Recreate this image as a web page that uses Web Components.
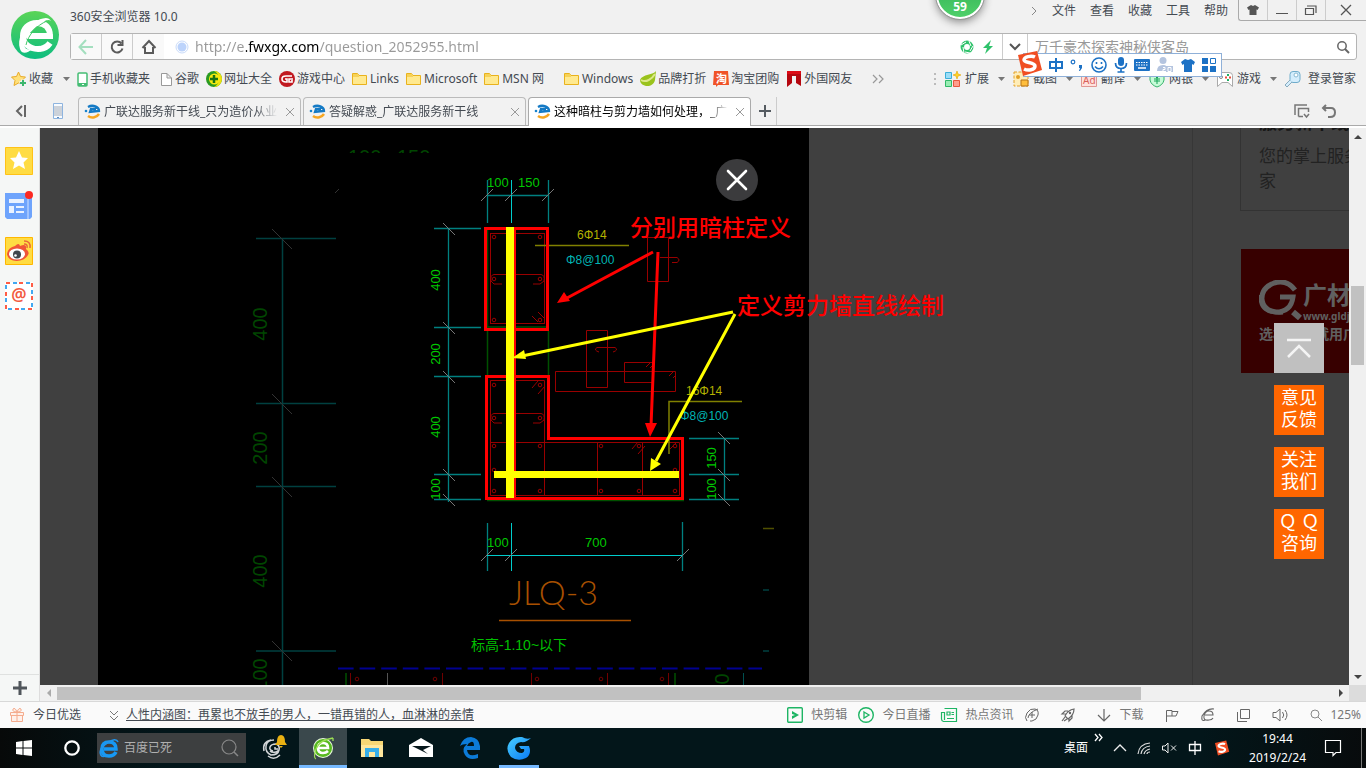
<!DOCTYPE html>
<html lang="zh-CN">
<head>
<meta charset="utf-8">
<title>这种暗柱与剪力墙如何处理</title>
<style>
html,body{height:100%;margin:0}
body{font:12px/16px "Noto Sans","Noto Sans CJK SC",sans-serif;color:#444a52;background:#f1f1f1;overflow:hidden}
</style>
</head>
<body>
<desktop-screen></desktop-screen>
<script>
const BASE='*{box-sizing:border-box}button{font:inherit;color:inherit;background:none;border:0;padding:0;margin:0;cursor:pointer;display:flex;align-items:center;justify-content:center}input{font:inherit;border:0;outline:0;background:none;padding:0;margin:0;min-width:0}a{color:inherit;text-decoration:none}';
function element(name,css,html,init){
  const t=document.createElement('template');
  t.innerHTML='<style>'+BASE+css+'</style>'+html;
  customElements.define(name,class extends HTMLElement{
    constructor(){super();this.attachShadow({mode:'open'}).append(t.content.cloneNode(true));}
    connectedCallback(){if(init)init(this,this.shadowRoot);}
  });
}

/* Icons: width, height, markup */
const folder='<path d="M.5 13.500V2.500H5.500L7 4.500H14.500V13.500Z" fill="#ffe98f" stroke="#e9b21d"/><path d="M1 3H5.500L7 5V6H1Z" fill="#f7d257"/>';
const sogou='<path d="M3 5 22 1 27 20 8 26Z" fill="#f04e23"/><path d="M20 7C16 5 9 7 9 10S20 12 20 16 13 21 9 19" fill="none" stroke="#fff" stroke-width="3.500"/>';
const ICONS={
 logo:[48,48,'<defs><linearGradient id="a" x2="0" y2="1"><stop stop-color="#5ad457"/><stop offset="1" stop-color="#0dbd80"/></linearGradient></defs><circle cx="24" cy="24" r="24" fill="url(#a)"/><path d="M16 25H39C39 16 34 12 26 12 17 12 12 18 12 25S18 38 27 38C33 38 37 35 39 32" fill="none" stroke="#fff" stroke-width="6"/><path d="M40 10C37 4 29 8 23 11 11 17 6 28 9 38 11 44 17 42 21 38 15 40 12 36 14 31 17 22 25 15 32 11 35 9 38 8 40 10Z" fill="#fff"/><path d="M15 34C17 24 26 14 36 10" fill="none" stroke="#41ca68"/>'],
 back:[16,16,'<path d="M15 8H2M8 1 1.500 8 8 15" fill="none" stroke="#a4dfbf" stroke-width="2"/>'],
 reload:[16,16,'<path d="M12.500 4.500A5.500 5.500 0 1 0 13.500 9.500" fill="none" stroke="#5b5b5b" stroke-width="2"/><path d="M13.500 1V6H8.500" fill="none" stroke="#5b5b5b" stroke-width="2"/>'],
 home:[16,16,'<path d="M1.500 9 8 2 14.500 9M4 8V14H12V8" fill="none" stroke="#5b5b5b" stroke-width="2"/>'],
 dot:[14,14,'<circle cx="7" cy="7" r="6" fill="#fff" stroke="#c9dbfa" /><circle cx="7" cy="7" r="4.500" fill="#bcd3fb"/>'],
 shutter:[14,14,'<circle cx="7" cy="7" r="4.700" fill="none" stroke="#2fc26b" stroke-width="3.500"/><path d="M1 5 6 2M9 1 11 6M13 6 10 11M10 13 5 12M4 13 3 7" stroke="#fff"/>'],
 bolt:[12,14,'<path d="M9 0 1 8H5L3 14 11 6H7Z" fill="#2fc26b"/>'],
 down:[12,8,'<path d="M1 1 6 6 11 1" fill="none" stroke="#555" stroke-width="2"/>'],
 search:[14,14,'<circle cx="6" cy="6" r="4.200" fill="none" stroke="#666" stroke-width="1.500"/><path d="M9 9 13 13" stroke="#666" stroke-width="2"/>'],
 more:[7,10,'<path d="M1 1 5 5 1 9" fill="none" stroke="#888"/>'],
 shirt:[12,10,'<path d="M4 0 6 1 8 0 12 2.500 10.500 5 9.500 4.500V10H2.500V4.500L1.500 5 0 2.500Z" fill="#555"/>'],
 min:[12,10,'<path d="M0 8.500H12" stroke="#555"/>'],
 max:[12,10,'<path d="M.5 3.500H8.500V9.500H.5ZM2 1H11V8" fill="none" stroke="#555" stroke-width="1.200"/>'],
 close:[10,10,'<path d="M0 0 10 10M10 0 0 10" stroke="#555" stroke-width="1.300"/>'],
 tabclose:[8,8,'<path d="M0 0 8 8M8 0 0 8" stroke="#999"/>'],
 caret:[7,4,'<path d="M0 0H7L3.500 4Z" fill="#777"/>'],
 star:[16,16,'<path d="M7.500 1 9.500 5.500 14.500 6 11 9.500 12 14.500 7.500 12 3 14.500 4 9.500 .5 6 5.500 5.500Z" fill="#ffe07a" stroke="#e9ab28"/><path d="M12 8.500V15.500M8.500 12H15.500" stroke="#f1f1f1" stroke-width="4"/><path d="M12 9V15M9 12H15" stroke="#3cb66d" stroke-width="2"/>'],
 phone:[11,16,'<rect x="1" y="2" width="9" height="13" rx="1" fill="#fff" stroke="#45bd74" stroke-width="1.500"/><path d="M1 12H10V15H1Z" fill="#45bd74"/><path d="M5 13.500H7" stroke="#fff"/>'],
 page:[16,16,'<path d="M4.500 2.500H10L14.500 7V14.500H4.500ZM10 2.500V7H14.500" fill="#fff" stroke="#999"/>'],
 plusball:[16,16,'<circle cx="8" cy="8" r="8" fill="#2a9a21"/><path d="M8 0A8 8 0 0 1 8 16 9 9 0 0 0 8 0Z" fill="#f0e20b"/><circle cx="8.500" cy="8" r="5.500" fill="#f6ea10"/><path d="M8 4V12M4 8H12" stroke="#187313" stroke-width="2.500"/>'],
 game:[16,16,'<circle cx="8" cy="8" r="8" fill="#c11920"/><path d="M13 5H7Q3 5 3 8T7 11H8V8H6M14 8H10V11H13V9" fill="none" stroke="#fff" stroke-width="1.600"/>'],
 folder:[16,16,folder],
 leaf:[16,16,'<path d="M16 0C14 4 2 3 0 9C0 16 13 18 15 9Z" fill="#9ac31c"/><path d="M1 9C6 12 12 8 15 3" fill="none" stroke="#dce88a" stroke-width="2"/>'],
 tao:[16,16,'<path d="M1 0H15L16 14H5L3 16V14H0Z" fill="#f05328"/><text x="3" y="12" font-size="11" font-weight="bold" fill="#fff">淘</text>'],
 gate:[16,16,'<path d="M1 0H15V15L10 12V5H6V12L1 16Z" fill="#b5070f"/><path d="M1 0H15V3H1Z" fill="#dd0a14"/>'],
 dbl:[12,10,'<path d="M1 1 5 5 1 9M7 1 11 5 7 9" fill="none" stroke="#999" stroke-width="1.200"/>'],
 grip:[4,14,'<path d="M2 1V14" stroke="#bbb" stroke-width="2" stroke-dasharray="2 3"/>'],
 ext:[16,16,'<path d="M.5 1.500H6.500V7.500H.5Z" fill="#9bddf7" stroke="#3bafd9"/><path d="M.5 9.500H6.500V15.500H.5Z" fill="#99edb4" stroke="#31b968"/><path d="M8.500 9.500H14.500V15.500H8.500Z" fill="#ff9e8d" stroke="#e65840"/><path d="M12 0 13 3 16 4 13 5 12 8 11 5 8 4 11 3Z" fill="#ffd426" stroke="#e6a400" stroke-width=".6"/>'],
 shot:[16,16,'<path d="M1 1H15V15H1Z" fill="#ffedb7" stroke="#e3a128" stroke-dasharray="3 1.500"/><path d="M8 9H15V15H8Z" fill="#ffbe3c" stroke="#b57318"/><circle cx="5" cy="6" r="2" fill="#e3a128"/>'],
 ad:[16,16,'<path d="M.5 1.500H15.500V15.500H.5Z" fill="#ffe1dd" stroke="#e09793"/><text x="2" y="13" font-size="10" fill="#d9605a">Ad</text>'],
 bank:[16,16,'<path d="M1 3Q5 3 8 0 11 3 15 3V9Q14 14 8 16 2 14 1 9Z" fill="#c7fbd8" stroke="#35b46b"/><path d="M5 4 8 7 11 4M8 7V13M5 8H11M5 10H11" fill="none" stroke="#16a456"/>'],
 pad:[16,16,'<path d="M.5 15.500V4.500Q.5 1.500 4 1.500H12Q15.500 1.500 15.500 4.500V15.500L11 11.500H5Z" fill="#fff" stroke="#aaa"/><circle cx="4" cy="6" r="1.500" fill="none" stroke="#888"/><path d="M11 3V5M11 8V10" stroke="#1fae62" stroke-width="2"/><path d="M8 6.500H10M12 6.500H14" stroke="#e8503d" stroke-width="2"/>'],
 key:[16,16,'<rect x="5" y=".5" width="10" height="11" rx="3" fill="#d4edfc" stroke="#6faccb"/><circle cx="11" cy="4" r="2" fill="#fff" stroke="#88b9d1"/><path d="M5 9 0 14 2 16 7 11" fill="#d4edfc" stroke="#88aabd"/>'],
 collapse:[12,12,'<path d="M7 1 2 6 7 11M10 0V12" fill="none" stroke="#666" stroke-width="2"/>'],
 mobile:[10,16,'<path d="M.5.5H9.500V15.500H.5Z" fill="#f7fbff" stroke="#8eb4df"/><path d="M1 3H9V13H1Z" fill="#ccd2da"/><path d="M4 14.500H6" stroke="#608cc1"/>'],
 fav:[16,14,'<path d="M4 2C9-1 15 2 15 6L6 7 7 4 12 4" fill="none" stroke="#147ac5" stroke-width="2.300"/><path d="M4 11C8 14 13 12 15 9" fill="none" stroke="#f5a623" stroke-width="2.500"/><circle cx="2" cy="6" r="1.300" fill="#1683ce"/>'],
 plus:[12,12,'<path d="M6 0V12M0 6H12" stroke="#555b61" stroke-width="2"/>'],
 bigplus:[14,14,'<path d="M7 0V14M0 7H14" stroke="#50565b" stroke-width="3"/>'],
 tabs:[16,14,'<path d="M1 11V1H13M4.500 12.500V4.500H14.500V8M4.500 12.500H9" fill="none" stroke="#777" stroke-width="1.500"/><path d="M10 10 12.500 13 15 10" fill="none" stroke="#777" stroke-width="1.500"/>'],
 undo:[14,14,'<path d="M1 4H9Q13 4 13 8.500T8 13H6M4 1 1 4 4 7" fill="none" stroke="#777" stroke-width="2"/>'],
 sideStar:[28,28,'<path d="M.5.5H27.500V27.500H.5Z" fill="#ffdc43" stroke="#ffc217"/><path d="M14 4 17 10.500 23 11 18.500 15.500 20 22 14 18.500 8 22 9.500 15.500 5 11 11 10.500Z" fill="#fff"/>'],
 sideNews:[28,28,'<path d="M0 1H27V25L25 27H2L0 25Z" fill="#6ea4fc"/><path d="M23 1V27" stroke="#9fc3ff" stroke-width="2"/><path d="M4 7H19V11H4ZM4 14H9V21H4ZM11 14H19V16H11ZM11 19H19V21H11Z" fill="#eaf2ff"/><circle cx="24" cy="3" r="4" fill="#fb2922"/>'],
 weibo:[28,28,'<path d="M.5.5H27.500V27.500H.5Z" fill="#ffdc43" stroke="#ffb700"/><path d="M10 9Q14 5 15 9 22 6 21 12 25 15 23 18C19 26 3 26 2 17 3 12 6 10 10 9Z" fill="#f05437"/><ellipse cx="12" cy="17" rx="8" ry="5.500" fill="#fff"/><circle cx="12" cy="17.500" r="4" fill="#40464c"/><circle cx="10.500" cy="18.500" r="1.300" fill="#fff"/><path d="M19 4Q26 4 25 11M19 7Q23 7 22 11" fill="none" stroke="#e9663a" stroke-width="1.500"/>'],
 mailAt:[28,28,'<path d="M0 0H28V28H0Z" fill="#fff"/><path d="M1 1H27V27H1Z" fill="none" stroke="#ff5c45" stroke-width="2" stroke-dasharray="4 9"/><path d="M1 1H27V27H1Z" fill="none" stroke="#42a8f1" stroke-width="2" stroke-dasharray="4 9" stroke-dashoffset="6"/><text x="14" y="19" text-anchor="middle" font-size="17" font-weight="600" fill="#f25a41">@</text>'],
 gift:[16,16,'<path d="M1.500 5.500H14.500V8.500H1.500ZM2.500 8.500H13.500V14.500H2.500ZM8 5V14M8 5Q3 5 4 2 6 0 8 5 10 0 12 2 13 5 8 5" fill="#fff1eb" stroke="#f5ac8e"/>'],
 dd:[8,9,'<path d="M0 0 4 4 8 0M0 5 4 9 8 5" fill="none" stroke="#777"/>'],
 edit:[16,16,'<rect x=".7" y=".7" width="14.600" height="14.600" rx="1" fill="none" stroke="#1eb564" stroke-width="1.400"/><path d="M5 4 12 8 5 12V9L8 8 5 7Z" fill="#1eb564"/>'],
 live:[16,16,'<circle cx="8" cy="8" r="7.300" fill="none" stroke="#1eb564" stroke-width="1.400"/><path d="M6 5 11 8 6 11Z" fill="none" stroke="#1eb564" stroke-width="1.300"/>'],
 news:[16,16,'<path d="M3.500 1.500H15.500V14.500H2.500Q.5 14 .5 12V5.500H3.500V13M6 5H9V8H6ZM10.500 5.500H13M10.500 7.500H13M6 11.500H13" fill="none" stroke="#1eb564" stroke-width="1.200"/>'],
 speed:[14,14,'<path d="M2 13Q-1 10 2 5T10 1Q14 2 13 7T7 13H5M3 10Q3 5 13 1M4 7H10M7 4V10" fill="none" stroke="#666"/>'],
 rocket:[14,14,'<path d="M4 8Q7 2 13 1 13 7 7 11ZM5 6 1 6 4 3H7M8 10V13L11 10V7M4 9 1 13M6 11 3 13" fill="none" stroke="#666" stroke-width="1.200"/><circle cx="9" cy="5" r="1.200" fill="#666"/>'],
 dl:[14,14,'<path d="M7 1V13M1 7 7 13 13 7" fill="none" stroke="#666" stroke-width="1.200"/>'],
 flag:[14,14,'<path d="M1.500 14V2.500H7V8H1.500M7 3.500H13L11 8H7" fill="none" stroke="#666"/>'],
 ebr:[14,14,'<path d="M4 7H12Q12 3 8 3T3 8 8 12Q11 12 12 10M13 1Q6 0 1 8 0 14 4 12" fill="none" stroke="#666" stroke-width="1.100"/>'],
 win:[13,13,'<path d="M3.500.5H12.500V9.500H3.500ZM.5 3V12.500H10" fill="none" stroke="#666"/>'],
 sound:[16,14,'<path d="M1 4.500H4L8 1V13L4 9.500H1ZM10.500 4Q13 7 10.500 10M13 2Q17 7 13 12" fill="none" stroke="#666"/>'],
 zoom:[12,12,'<circle cx="5" cy="5" r="4" fill="none" stroke="#888"/><path d="M8 8 12 12" stroke="#888"/>'],
 windows:[16,16,'<path d="M0 2 6.500 1V7.500H0ZM7.500 1 16 0V7.500H7.500ZM0 8.500H6.500V15L0 14ZM7.500 8.500H16V16L7.500 15Z" fill="#fff"/>'],
 ring:[16,16,'<circle cx="8" cy="8" r="6.700" fill="none" stroke="#fff" stroke-width="2.300"/>'],
 ie:[20,20,'<path d="M5 11H17Q17 4 10 4T3 11 10 18Q15 18 17 14" fill="none" stroke="#1699f5" stroke-width="3.500"/><path d="M19 4Q17-1 8 5T2 17Q3 20 8 17" fill="none" stroke="#2095ec" stroke-width="1.700"/>'],
 find:[18,18,'<circle cx="8" cy="8" r="7" fill="none" stroke="#888" stroke-width="1.200"/><path d="M13 13 17 17" stroke="#888" stroke-width="1.500"/>'],
 swirl:[28,28,'<path d="M13 17Q9 16 10 13T16 10Q20 11 19 16T11 21Q5 18 6 12T14 6M19 16 16 18Q12 19 10 17M15 13V15H18M4 17Q2 8 11 6M8 22Q14 27 20 21" fill="none" stroke="#d3d6d8" stroke-width="1.500"/><path d="M15 11 17 8Q17 1 21 1T25 8L27 11ZM19 12H23L21 14Z" fill="#eab112"/>'],
 browser:[24,24,'<circle cx="12" cy="12" r="10" fill="#eaf8de"/><circle cx="12" cy="12" r="9" fill="#58b920"/><path d="M8 12H17Q17 7 12 7T7 12 12 17Q15 17 17 15" fill="none" stroke="#fff" stroke-width="2.600"/><path d="M22 2Q8 4 5 13T5 23M22 2V5" fill="none" stroke="#9bdf54" stroke-width="1.300"/>'],
 explorer:[22,20,'<path d="M0 1H8L10 3H22V19H0Z" fill="#f8d775"/><path d="M0 7H22V19H0Z" fill="#ffe69c"/><path d="M4 19V10H18V19H14V14H8V19Z" fill="#38aee8"/>'],
 mail:[24,20,'<path d="M0 7 12 0 24 7V19H0Z" fill="#fff"/><path d="M3 8H22L14 12 19 16 11 12Z" fill="#06171b"/>'],
 edge:[22,22,'<path d="M1 9Q4 0 12 0 20 1 21 9V13H8Q9 21 19 17V21Q10 24 6 18 2 12 8 7 3 7 1 9ZM8 9H15Q15 4 12 5T8 9Z" fill="#0c7bd8"/>'],
 gblue:[24,24,'<defs><linearGradient id="a" x2="1" y2="1"><stop stop-color="#49cfff"/><stop offset="1" stop-color="#0878f5"/></linearGradient></defs><path d="M24 2Q19 7 14 6 8 7 8 12 9 17 15 17 18 16 17 13H14L12 10H22Q25 18 19 22 11 26 4 21-2 14 2 7 6 0 15 1 20 4 24 2Z" fill="url(#a)"/>'],
 up:[12,8,'<path d="M0 7 6 1 12 7" fill="none" stroke="#eee" stroke-width="1.300"/>'],
 wifi:[14,14,'<path d="M1 13Q2 3 13 2M4 13Q5 6 13 5M7 13Q8 9 13 8M10 13Q10 11 13 11" fill="none" stroke="#ddd" stroke-width="1.200"/>'],
 mute:[15,12,'<path d="M.5 4H3L6 1V11L3 8H.5ZM9 3.500 14 8.500M14 3.500 9 8.500" fill="none" stroke="#eee"/>'],
 dblw:[8,7,'<path d="M0 0 3 3.500 0 7M4 0 7 3.500 4 7" fill="none" stroke="#fff" stroke-width="1.300"/>'],
 sogou:[28,27,sogou],
 note:[16,16,'<path d="M.5.5H15.500V12.500H11L8 15.500V12.500H.5Z" fill="none" stroke="#fff" stroke-width="1.200"/>'],
 smile:[16,16,'<circle cx="8" cy="8" r="7" fill="none" stroke="#1d72c5" stroke-width="1.600"/><path d="M5.500 5V7M10.500 5V7M4 9.500Q8 14 12 9.500" fill="none" stroke="#1d72c5" stroke-width="1.600"/>'],
 mic:[14,16,'<rect x="4" y="0" width="6" height="9" rx="3" fill="#1d72c5"/><path d="M1.500 6Q1.500 11.500 7 11.500T12.500 6M7 11V15M3.500 15H10.500" fill="none" stroke="#1d72c5" stroke-width="1.700"/>'],
 keyb:[16,12,'<rect width="16" height="12" rx="1" fill="#1d72c5"/><path d="M2 3.500H14M2 6H14" stroke="#fff" stroke-dasharray="1.500 1"/><path d="M4 9H12" stroke="#fff" stroke-width="1.500"/>'],
 user:[17,16,'<circle cx="6" cy="3.500" r="3.500" fill="#b4c4df"/><path d="M0 14Q0 8 6 8 9 8 9 9V14ZM9 9H16V15H9Z" fill="#b4c4df"/><path d="M6 10.500H8V12.500H6V14.500H8.500M11 10.500H14V14.500H11Z" fill="none" stroke="#fff"/>'],
 tee:[14,14,'<path d="M4 1 7 2 10 1 14 4 12.500 7 11 6V14H3V6L1.500 7 0 4Z" fill="#1d72c5"/>'],
 apps:[14,14,'<path d="M0 0H6V6H0ZM0 8H6V14H0ZM8 8H14V14H8Z" fill="#1d72c5"/><path d="M8.500.5H13.500V5.500H8.500Z" fill="none" stroke="#1d72c5"/>'],
 zhong:[14,14,'<path d="M1 4H13V10H1ZM7 0V14" fill="none" stroke="#1d72c5" stroke-width="2"/>'],
 zhongw:[14,14,'<path d="M1.500 3.500H12.500V9.500H1.500ZM7 0V14" fill="none" stroke="#fff" stroke-width="1.300"/>'],
 punct:[14,14,'<circle cx="3" cy="4" r="1.800" fill="none" stroke="#1d72c5" stroke-width="1.200"/><path d="M9 7H12V10L10 13H9L10 10H9Z" fill="#1d72c5"/>'],
 top:[26,22,'<path d="M1 3H25M2 20 13 9 24 20" fill="none" stroke="#f4f4f4" stroke-width="2.500"/>'],
 shut:[20,20,'<path d="M1 1 19 19M19 1 1 19" stroke="#fff" stroke-width="2.600" stroke-linecap="round"/>']
};
element('ui-icon',':host{display:inline-flex;flex:none}svg{display:block;overflow:visible}','',(h,r)=>{
  const icon=ICONS[h.getAttribute('name')];
  if(!icon||r.querySelector('svg'))return;
  const [w,hh,m]=icon,s=+h.getAttribute('size')||w;
  r.innerHTML+=`<svg width="${s}" height="${Math.round(hh*s/w)}" viewBox="0 0 ${w} ${hh}" aria-hidden="true">${m}</svg>`;
});

element('title-bar',`
:host{display:flex;height:33px;align-items:flex-start}
.t{flex:1;padding-top:9px}
nav{display:flex;gap:14px;padding-top:3px;margin-right:10px;align-items:center}
.w{display:flex;height:21px;border:1px solid #aaa;border-top:0;border-right:0;border-radius:0 0 0 3px}
.w button{width:28px;height:20px;border-left:1px solid #ccc;box-sizing:content-box}
.w button:first-child{border:0}.w button:last-child{width:40px}
`,`<div class="t">360安全浏览器 10.0</div>
<nav><ui-icon name="more"></ui-icon><a href="#">文件</a><a href="#">查看</a><a href="#">收藏</a><a href="#">工具</a><a href="#">帮助</a></nav>
<div class="w"><button aria-label="皮肤"><ui-icon name="shirt"></ui-icon></button><button aria-label="最小化"><ui-icon name="min"></ui-icon></button><button aria-label="还原"><ui-icon name="max"></ui-icon></button><button aria-label="关闭"><ui-icon name="close"></ui-icon></button></div>`);

element('address-bar',`
:host{display:flex;height:27px;margin-right:9px;border:1px solid #b4b4b4;border-radius:3px;background:#fff;align-items:stretch}
.n{width:31px;background:#f9f9f9;border-right:1px solid #ccc}
.n:nth-of-type(3){border:0}
.u{flex:1;display:flex;align-items:center;gap:6px;padding-left:11px}
.u input{flex:1;height:25px;font-size:14px;color:transparent;background:linear-gradient(90deg,#999 51px,#000 51px 124px,#999 124px);-webkit-background-clip:text;background-clip:text}
.act{display:flex;gap:8px;align-items:center;margin-right:8px}
.d{width:26px;border:solid #ccc;border-width:0 1px}
.s{width:328px;display:flex;align-items:center;padding:0 6px 0 7px}
.s input{flex:1;font-size:14px;color:#777}.s input::placeholder{color:#999}
`,`<button class="n" aria-label="后退"><ui-icon name="back"></ui-icon></button><button class="n" aria-label="刷新"><ui-icon name="reload"></ui-icon></button><button class="n" aria-label="主页"><ui-icon name="home"></ui-icon></button>
<div class="u"><ui-icon name="dot"></ui-icon><input aria-label="地址" value="http://e.fwxgx.com/question_2052955.html"></div>
<div class="act"><ui-icon name="shutter"></ui-icon><ui-icon name="bolt"></ui-icon></div>
<button class="d" aria-label="展开"><ui-icon name="down"></ui-icon></button>
<div class="s"><input aria-label="搜索" placeholder="万千豪杰探索神秘侠客岛"><button aria-label="搜索"><ui-icon name="search"></ui-icon></button></div>`);

element('browser-header',`
:host{display:grid;grid-template-columns:70px 1fr;height:60px}
.l{padding:11px}`,`<div class="l"><ui-icon name="logo"></ui-icon></div><div><title-bar></title-bar><address-bar></address-bar></div>`);

element('book-mark',`:host{display:flex;flex:none}a{display:flex;align-items:center;gap:2px;white-space:nowrap}.i{display:flex}`,
`<a href="#"><span class="i"></span><slot></slot></a>`,(h,r)=>r.querySelector('.i').innerHTML=`<ui-icon name="${h.getAttribute('icon')}"></ui-icon>`);
element('tool-item',`:host{display:flex;flex:none}button{gap:4px;white-space:nowrap}.i{display:flex}.c{margin-left:5px;display:flex}:host([plain]) .c{display:none}:host([plain]) button{gap:7px}`,
`<button><span class="i"></span><slot></slot><span class="c"><ui-icon name="caret"></ui-icon></span></button>`,(h,r)=>r.querySelector('.i').innerHTML=`<ui-icon name="${h.getAttribute('icon')}"></ui-icon>`);

element('bookmark-bar',`
:host{display:flex;height:36px;align-items:center;justify-content:space-between;padding:1px 10px 0 11px}
.g,.f,.r{display:flex;align-items:center}
.g{gap:7px}.f{gap:20px}.r{gap:8px}
.first{display:flex;align-items:center;gap:10px}
`,`<div class="f"><div class="g"><div class="first"><book-mark icon="star">收藏</book-mark><ui-icon name="caret"></ui-icon></div>
<book-mark icon="phone">手机收藏夹</book-mark><book-mark icon="page">谷歌</book-mark><book-mark icon="plusball">网址大全</book-mark><book-mark icon="game">游戏中心</book-mark><book-mark icon="folder">Links</book-mark><book-mark icon="folder">Microsoft</book-mark><book-mark icon="folder">MSN 网</book-mark></div>
<div class="g"><book-mark icon="folder">Windows</book-mark><book-mark icon="leaf">品牌打折</book-mark><book-mark icon="tao">淘宝团购</book-mark><book-mark icon="gate">外国网友</book-mark></div><ui-icon name="dbl"></ui-icon></div>
<div class="r"><ui-icon name="grip"></ui-icon><tool-item icon="ext">扩展</tool-item><tool-item icon="shot">截图</tool-item><tool-item icon="ad">翻译</tool-item><tool-item icon="bank">网银</tool-item><tool-item icon="pad">游戏</tool-item><tool-item icon="key" plain>登录管家</tool-item></div>`);

element('page-tab',`
:host{display:flex;width:223px;height:28px;align-items:center;gap:4px;padding:0 6px 0 5px;border:1px solid #bbb;border-bottom:0;border-radius:4px 4px 0 0;background:#f2f2f2}
:host([active]){background:#fff;color:#000;border-color:#aaa;margin-bottom:-1px;height:29px}
span{flex:1;min-width:0;overflow:hidden;white-space:nowrap;margin-right:4px;-webkit-mask:linear-gradient(90deg,#000 150px,transparent 174px)}
`,`<ui-icon name="fav"></ui-icon><span><slot></slot></span><button aria-label="关闭标签"><ui-icon name="tabclose"></ui-icon></button>`);
element('tab-strip',`
:host{display:flex;height:30px;align-items:flex-end;border-bottom:1px solid #aaa;padding-right:30px}
.l{width:78px;display:flex;align-items:center;gap:26px;padding-left:15px;height:29px}
.tabs{display:flex;gap:2px;flex:1;align-items:flex-end}
.plus{width:24px;height:28px;border-right:1px solid #ccc}
.r{display:flex;gap:12px;height:29px;align-items:center}
`,`<div class="l"><button aria-label="收起"><ui-icon name="collapse"></ui-icon></button><ui-icon name="mobile"></ui-icon></div>
<div class="tabs"><page-tab>广联达服务新干线_只为造价从业者</page-tab><page-tab>答疑解惑_广联达服务新干线</page-tab><page-tab active>这种暗柱与剪力墙如何处理，_广联达</page-tab><button class="plus" aria-label="新标签"><ui-icon name="plus"></ui-icon></button></div>
<div class="r"><button aria-label="标签列表"><ui-icon name="tabs"></ui-icon></button><button aria-label="撤销关闭"><ui-icon name="undo"></ui-icon></button></div>`);

element('side-bar',`
:host{display:flex;flex-direction:column;width:40px;background:#f5f7f6;border-right:1px solid #ddd}
.i{flex:1;display:flex;flex-direction:column;gap:17px;padding:19px 0 0 5px;align-items:flex-start}
.p{height:27px;border-top:1px solid #dfe1e0}
`,`<div class="i"><button aria-label="收藏"><ui-icon name="sideStar"></ui-icon></button><button aria-label="新闻"><ui-icon name="sideNews"></ui-icon></button><button aria-label="微博"><ui-icon name="weibo"></ui-icon></button><button aria-label="邮箱"><ui-icon name="mailAt"></ui-icon></button></div><button class="p" aria-label="添加"><ui-icon name="bigplus"></ui-icon></button>`);

/* CAD picture */
const dots=a=>a.map(([x,y])=>`<circle cx="${x}" cy="${y}" r="1.800"/>`).join('');
const slash=a=>a.map(([x,y])=>`M${x-6} ${y+6}L${x+6} ${y-6}`).join('');
const back=(a,n=6)=>a.map(([x,y])=>`M${x-n} ${y-n}L${x+n} ${y+n}`).join('');
const turned=(x,y,t)=>`<text transform="translate(${x} ${y}) rotate(-90)" text-anchor="middle">${t}</text>`;
element('cad-drawing',`
:host{display:block;position:relative;flex:none;background:#000}
svg{display:block;overflow:visible}
svg path,svg rect{fill:none}
text{font-family:"Liberation Sans","Noto Sans CJK SC",sans-serif}
.title{font-family:Lato,sans-serif;font-weight:300}
.tip-red{fill:red}.tip-yellow{fill:#ff0}
button{position:absolute;left:618px;top:31px;width:42px;height:42px;border-radius:50%;background:#3b3b3d}
`,`<svg width="711" height="557" viewBox="98 128 711 557">
<defs><clipPath id="cut"><rect x="340" y="149" width="100" height="4"/></clipPath><clipPath id="pic"><rect x="98" y="128" width="711" height="557"/></clipPath></defs>
<g clip-path="url(#pic)">
<path stroke="#004040" stroke-width="1.500" d="M282.500 239V685M256 238.500H336M256 403.500H336M256 486.500H336M256 651H336"/>
<path stroke="#333" d="${back([[282,239],[282,404],[282,487],[282,651]],10)}M335 193 339 189"/>
<g fill="#004600" font-size="20">${turned(267,324,'400')}${turned(267,448,'200')}${turned(267,571,'400')}${turned(267,675,'100')}</g>
<g clip-path="url(#cut)" fill="#004600" font-size="20"><text x="348" y="164">100</text><text x="397" y="164">150</text></g>
<path stroke="#008080" stroke-width="1.300" d="M487.500 180V223M548.500 180V223M487 195.500H549M448.500 228V502M434 228.500H481M434 327.500H481M434 376.500H481M434 474.500H481M434 499.500H481M724.500 438V500M689 438.500H739M689 474.500H739M689 499.500H739M487.500 523V571M682.500 522V571"/>
<path stroke="#0cc" d="M511.500 180V223M511.500 523V571M487 555.500H683"/>
<path stroke="#777" d="${slash([[487,195],[511,195],[548,195],[487,555],[511,555],[683,555]])}${back([[449,229],[449,328],[449,377],[449,475],[449,500],[724,438],[724,475],[724,500]])}"/>
<path stroke="#005000" stroke-width="1.500" d="M487.500 228V376M548.500 331V376M487 500.500H684M486 327H548"/>
<g stroke="#900" fill="none"><rect x="490.500" y="233.500" width="54" height="90"/><path d="M494 274.500H541Q545 275 544 281L540 284H533M494 274.500Q490 275 491 281L494 284H502M532 316 538 322M538 312 545 319M490.500 495.500V380.500H544.500V495.500M490.500 442.500H679.500V495.500H490.500M597.500 442V495M642.500 442V495M494 413.500H541Q545 414 544 420L540 423H533M494 413.500Q490 414 491 420L494 423H502M532 388 538 381M538 394 545 386M632 449 638 442M638 454 645 446M670 449 677 442M647.500 237.500H668.500V281.500H647.500ZM660 257.500H677Q681 260 677 262.500H672M586.500 330.500H607.500V387.500H586.500ZM597 347.500H615Q619 350 613 352M597 347.500Q593 350 599 352M555.500 371.500H675.500V391.500H555.500ZM624.500 362.500H652.500V382.500H624.500ZM669 376 674 371M673 378 676 375M646 367 651 362M650 368 653 365"/>${dots([[494,237],[540,237],[494,279],[540,279],[494,320],[540,320],[494,385],[540,385],[494,418],[540,418],[494,446],[540,446],[601,446],[639,446],[675,446],[494,491],[540,491],[601,491],[639,491],[675,491],[494,470],[675,470]])}</g>
<g fill="#00c800" font-size="13"><text x="487" y="187">100</text><text x="518" y="187">150</text><text x="487" y="547">100</text><text x="585" y="547">700</text>${turned(440,280,'400')}${turned(440,354,'200')}${turned(440,427,'400')}${turned(440,489,'100')}${turned(716,458,'150')}${turned(716,489,'100')}</g>
<path stroke="#808000" stroke-width="1.500" d="M535 245.500H629M742 401.500H669V454"/><path stroke="#505000" stroke-width="1.500" d="M763 528.500H774"/>
<g fill="#b4b200" font-size="12"><text x="577" y="239">6Φ14</text><text x="686" y="395">16Φ14</text></g>
<g fill="#00b4b4" font-size="12"><text x="566" y="264">Φ8@100</text><text x="680" y="420">Φ8@100</text></g>
<path stroke="#004040" stroke-width="1.500" d="M763 590H769M763 651H769"/>
<text class="title" x="509" y="605" fill="#a85000" font-size="34">JLQ-3</text><path stroke="#a85000" stroke-width="1.500" d="M499 620.500H631"/>
<text x="471" y="650" fill="#00c000" font-size="14">标高-1.10~以下</text>
<path stroke="#000090" stroke-width="2" stroke-dasharray="15.600 6" d="M338 668.500H762"/>
<path stroke="#005000" stroke-width="1.500" d="M346 673V685M675 673V685"/><path stroke="#700000" d="M350.500 673V685M442.500 673V685M531.500 673V685M607.500 673V685M668.500 673V685"/><path stroke="#555" d="M387.500 673V685"/><path stroke="#005050" d="M743.500 673V685"/>
<g stroke="#700000" fill="none">${dots([[357,679],[435,679],[537,679],[601,679],[662,679]])}</g>
<g fill="#004600" font-size="20">${turned(729,690,'100')}</g>
<path stroke="red" stroke-width="3" d="M485.500 228.500H547.500V329.500H485.500ZM486.500 376.500H548.500V438.500H682.500V498.500H486.500Z"/>
<path stroke="red" stroke-width="2" d="M515 228V498"/>
<path stroke="#ff0" stroke-width="8" d="M510 227V498"/><path stroke="#ff0" stroke-width="7" d="M494 474.500H679"/>
<path stroke="red" stroke-width="3" d="M653 252 567 298M658 252 651 426"/><path class="tip-red" d="M557 303 564 292 570 301ZM650 437 645 423 657 423Z"/>
<path stroke="#ff0" stroke-width="3" d="M733 312 522 356M735 314 656 461"/><path class="tip-yellow" d="M512 358 524 350 526 359ZM650 471 651 458 661 464Z"/>
</g>
<g fill="red" font-size="23" font-weight="500"><text x="630" y="236">分别用暗柱定义</text><text x="737" y="314">定义剪力墙直线绘制</text></g>
</svg><button aria-label="关闭图片"><ui-icon name="shut"></ui-icon></button>`);

element('page-aside',`
:host{display:block;flex:none;width:157px;border-left:1px solid #373737;padding-left:47px;overflow:hidden;color:#222;white-space:nowrap}
.c{width:240px;height:103px;margin-top:-20px;border:1px solid #333;padding-left:18px;font-size:17px;line-height:25px;margin-bottom:38px}
h3{margin:0 0 8px;font-size:18px;line-height:26px;color:#161616}
.b{width:240px;height:124px;margin-left:1px;background:#370000;color:#606060;padding:31px 0 0 18px}
.h{display:flex}.h b{display:block;font-size:24px;line-height:30px}.h small{display:block;font-size:10px;font-weight:bold;line-height:12px}
p{margin:3px 0 0;font-size:14px;line-height:18px;font-weight:bold}
`,`<div class="c"><h3>服务新干线</h3>您的掌上服务专<br>家</div>
<div class="b"><div class="h"><svg width="44" height="40" viewBox="0 0 44 40"><path d="M36 10Q28-1 15 3 2 8 3 20 5 31 17 32 32 32 34 17H21" fill="none" stroke="#606060" stroke-width="5"/><path d="M1 15Q0 35 24 33" fill="none" stroke="#606060" stroke-width="3"/><path d="M34 32 41 38" stroke="#606060" stroke-width="6"/></svg><div><b>广材网</b><small>www.gldjc.com</small></div></div><p>选材料价就用广材</p></div>`);

element('float-dock',`
:host{display:flex;flex-direction:column;gap:12px}
button{width:50px;height:50px;background:#f60;color:#fff;font-size:18px;line-height:22px;padding-bottom:5px}
.t{background:#c0c0c0;padding:0}`,
`<button class="t" aria-label="回到顶部"><ui-icon name="top"></ui-icon></button><button>意见<br>反馈</button><button>关注<br>我们</button><button>Ｑ Ｑ<br>咨询</button>`);

element('scroll-bar',`
:host{display:flex;background:#f0f0f0;height:16px;align-items:center}
:host([vertical]){flex-direction:column;width:17px;height:auto}
i{flex:none;width:17px;height:17px;display:grid;place-items:center}
i::before{content:"";border:4px solid transparent;border-right-color:#aaa;border-left:0}
i+.k+i::before{border:4px solid transparent;border-left-color:#444;border-right:0}
:host([vertical]) i::before{border:4px solid transparent;border-bottom-color:#444;border-top:0}
:host([vertical]) i+.k+i::before{border:4px solid transparent;border-top-color:#444;border-bottom:0}
.k{flex:1;height:13px;display:flex}
.k b{background:#c1c1c1;width:85%}
:host([vertical]) .k{width:13px;height:auto;flex-direction:column}
:host([vertical]) .k::before{content:"";flex:0 0 27%}
:host([vertical]) .k b{width:13px;height:15%}
`,`<i></i><div class="k"><b></b></div><i></i>`);

element('web-view',`
:host{flex:1;display:grid;grid-template:minmax(0,1fr) 16px/minmax(0,1fr) 17px;min-width:0}
.v{position:relative;display:flex;background:#404040;overflow:hidden;justify-content:space-between;padding-left:58px}
float-dock{position:absolute;right:25px;top:195px}
.k{background:#dcdcdc}
`,`<div class="v"><cad-drawing></cad-drawing><page-aside></page-aside><float-dock></float-dock></div><scroll-bar vertical></scroll-bar><scroll-bar></scroll-bar><div class="k"></div>`);

element('status-bar',`
:host{display:flex;height:27px;border-top:1px solid #d8d8d8;background:#fafafa;align-items:center;justify-content:space-between;padding:0 5px 0 9px}
div{display:flex;align-items:center}
.a{gap:8px}.a .x{margin-left:21px}a{text-decoration:underline}
.b,.c{color:#777}.b{gap:11px}.b button,.c button{gap:8px}.c{gap:22px;margin-left:12px}
`,`<div class="a"><ui-icon name="gift"></ui-icon><span>今日优选</span><ui-icon class="x" name="dd"></ui-icon><a href="#">人性内涵图：再累也不放手的男人，一错再错的人，血淋淋的亲情</a></div>
<div><div class="b"><button><ui-icon name="edit"></ui-icon>快剪辑</button><button><ui-icon name="live"></ui-icon>今日直播</button><button><ui-icon name="news"></ui-icon>热点资讯</button></div>
<div class="c"><ui-icon name="speed"></ui-icon><ui-icon name="rocket"></ui-icon><button><ui-icon name="dl"></ui-icon>下载</button><ui-icon name="flag"></ui-icon><ui-icon name="ebr"></ui-icon><ui-icon name="win"></ui-icon><ui-icon name="sound"></ui-icon><button><ui-icon name="zoom"></ui-icon>125%</button></div></div>`);

element('task-bar',`
:host{display:flex;height:40px;background:linear-gradient(90deg,#070909,#03161a 12%,#03161a 88%,#080b0c);color:#fff;justify-content:space-between}
.l{display:flex;gap:1px}.l>button{width:48px;height:40px;position:relative;border-bottom:3px solid transparent;border-top:3px solid transparent}
.l .on{background:#3a484c;border-bottom-color:#76b9ff;border-top-color:#3a484c}
.st{display:flex}.st button{width:48px;height:40px}
.s{width:149px;height:30px;margin:5px 3px 0 0;background:#3d3f40;display:flex;align-items:center;padding:0 7px 0 2px;gap:5px}
.s input{flex:1;width:0;color:#bbb}
.s input::placeholder{color:#b0b0b0}
.u{background:linear-gradient(#76b9ff,#76b9ff) center bottom/40px 3px no-repeat;background-origin:border-box;background-clip:border-box}
.r{display:flex;align-items:center;gap:13px}
.tray{display:flex;align-items:center;gap:11px}.q{align-self:flex-start;padding-top:6px;margin:0 -2px 0 -6px}
time{display:block;text-align:center;line-height:19px;padding:0 6px 0 6px}
.e{width:5px;height:40px;border-left:1px solid #777;margin-left:7px}
`,`<div class="l"><div class="st"><button aria-label="开始"><ui-icon name="windows"></ui-icon></button><button aria-label="助手"><ui-icon name="ring"></ui-icon></button></div>
<div class="s"><ui-icon name="ie"></ui-icon><input aria-label="搜索" placeholder="百度已死"><ui-icon name="find"></ui-icon></div>
<button aria-label="通知"><ui-icon name="swirl"></ui-icon></button><button class="on" aria-label="浏览器"><ui-icon name="browser"></ui-icon></button><button aria-label="文件"><ui-icon name="explorer"></ui-icon></button><button aria-label="邮件"><ui-icon name="mail"></ui-icon></button><button aria-label="Edge"><ui-icon name="edge"></ui-icon></button><button class="u" aria-label="广联达"><ui-icon name="gblue"></ui-icon></button></div>
<div class="r"><span>桌面</span><ui-icon class="q" name="dblw"></ui-icon><div class="tray"><ui-icon name="up"></ui-icon><ui-icon name="wifi"></ui-icon><ui-icon name="mute"></ui-icon><ui-icon name="zhongw"></ui-icon><ui-icon name="sogou" size="17"></ui-icon></div><time>19:44<br>2019/2/24</time><ui-icon name="note"></ui-icon><span class="e"></span></div>`);

element('ime-bar',`
:host{display:flex;align-items:center;width:199px;height:24px;background:#fff;border:1px solid #8fb0d8;padding:0 5px 0 25px;justify-content:space-between}
.s{position:absolute;left:-9px;top:-4px}
`,`<ui-icon class="s" name="sogou"></ui-icon><ui-icon name="zhong"></ui-icon><ui-icon name="punct"></ui-icon><ui-icon name="smile"></ui-icon><ui-icon name="mic"></ui-icon><ui-icon name="keyb"></ui-icon><ui-icon name="user"></ui-icon><ui-icon name="tee"></ui-icon><ui-icon name="apps"></ui-icon>`);

element('desktop-screen',`
:host{display:flex;flex-direction:column;height:100vh;position:relative;overflow:hidden}
main{flex:1;display:flex;min-height:0;border-top:2px solid #fff}
ime-bar{position:absolute;right:144px;top:53px}
.ball{position:absolute;right:382px;top:-29px;width:48px;height:48px;border-radius:50%;background:linear-gradient(#2ca850,#4fd06a);border:2px solid #fff;outline:1px solid #999;box-shadow:0 3px 8px #888;color:#fff;font-weight:bold;line-height:12px;align-items:flex-end;padding-bottom:4px}
`,`<browser-header></browser-header><bookmark-bar></bookmark-bar><tab-strip></tab-strip>
<main><side-bar></side-bar><web-view></web-view></main>
<status-bar></status-bar><task-bar></task-bar><ime-bar></ime-bar><button class="ball">59</button>`);
</script>
</body>
</html>
